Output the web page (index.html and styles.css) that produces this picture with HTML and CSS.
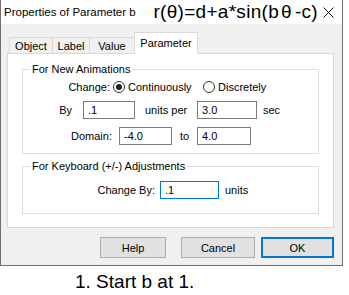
FILE: index.html
```html
<!DOCTYPE html>
<html>
<head>
<meta charset="utf-8">
<link rel="stylesheet" href="styles.css">
</head>
<body>
<div class="window">
  <div class="titlebar">
    <span class="title">Properties of Parameter b</span>
    <span class="formula">r(θ)=d+a*sin(b<span class="theta">θ</span>-c)</span>
    <span class="close"><svg width="11" height="11" viewBox="0 0 11 11"><path d="M0.5 0.5 L10.5 10.5 M10.5 0.5 L0.5 10.5" stroke="#111" stroke-width="1" fill="none"/></svg></span>
  </div>
  <div class="body">
    <div class="tabs">
      <div class="tab t-object">Object</div>
      <div class="tab t-label">Label</div>
      <div class="tab t-value">Value</div>
      <div class="tab t-param active">Parameter</div>
    </div>
    <div class="panel">
      <div class="group g1">
        <div class="legend">For New Animations</div>
        <div class="row r1">
          <span class="lbl w-change">Change:</span>
          <span class="opt opt1"><span class="radio checked"></span><span class="opt-text">Continuously</span></span>
          <span class="opt"><span class="radio"></span><span class="opt-text">Discretely</span></span>
        </div>
        <div class="row r2">
          <span class="lbl w-by">By</span>
          <span class="input in-by">.1</span>
          <span class="mid w-per">units per</span>
          <span class="input in-sec">3.0</span>
          <span class="after">sec</span>
        </div>
        <div class="row r3">
          <span class="lbl w-domain">Domain:</span>
          <span class="input in-min">-4.0</span>
          <span class="mid w-to">to</span>
          <span class="input in-max">4.0</span>
        </div>
      </div>
      <div class="group g2">
        <div class="legend">For Keyboard (+/-) Adjustments</div>
        <div class="row r4">
          <span class="lbl w-changeby">Change By:</span>
          <span class="input in-step focused">.1</span>
          <span class="after">units</span>
        </div>
      </div>
    </div>
    <div class="buttons">
      <div class="btn b-help">Help</div>
      <div class="btn b-cancel">Cancel</div>
      <div class="btn b-ok default">OK</div>
    </div>
  </div>
</div>
<p class="caption">1. Start b at 1.</p>
</body>
</html>
```

FILE: styles.css
```css
* { box-sizing: border-box; }
html, body { margin: 0; padding: 0; background: #fff; }
body {
  font-family: "Liberation Sans", Arial, sans-serif;
  color: #000;
  width: 349px;
  height: 295px;
  overflow: hidden;
}
.window {
  width: 343px;
  height: 266px;
  background: #f0f0f0;
  border: 1px solid #6f6f6f;
  border-top: none;
  display: flex;
  flex-direction: column;
}
.titlebar {
  height: 24px;
  background: #fff;
  display: flex;
  align-items: center;
  flex: none;
}
.title {
  font-size: 11.5px;
  padding-left: 3px;
  white-space: nowrap;
}
.formula {
  font-size: 19px;
  letter-spacing: 0.3px;
  margin-left: auto;
  white-space: nowrap;
  line-height: 22px;
}
.theta { margin: 0 3px 0 2px; }
.close {
  width: 11px;
  height: 11px;
  margin: 0 8px 0 5px;
  display: flex;
}
.body {
  flex: 1;
  padding: 0 8px 0 6px;
  display: flex;
  flex-direction: column;
  font-size: 11px;
}
.tabs {
  height: 30px;
  margin-bottom: -1px;
  display: flex;
  align-items: flex-end;
  padding-left: 2px;
  position: relative;
  z-index: 1;
}
.tab {
  height: 16px;
  margin-bottom: 1px;
  border: 1px solid #d9d9d9;
  border-bottom: none;
  background: #f0f0f0;
  display: flex;
  align-items: center;
  justify-content: center;
  margin-left: -1px;
  line-height: 14px;
}
.t-object { width: 44px; margin-left: 0; }
.t-label { width: 38px; }
.t-value { width: 46px; }
.t-param { width: 64px; }
.tab.active {
  height: 22px;
  margin-bottom: 0;
  background: #fff;
  align-items: flex-start;
  padding-top: 3px;
}
.panel {
  background: #fff;
  border: 1px solid #d9d9d9;
  padding-bottom: 13px;
}
.group {
  border: 1px solid #dcdcdc;
  margin: 0 14px;
}
.g1 { margin-top: 15px; padding-bottom: 8px; }
.g2 { margin-top: 12px; padding-bottom: 14px; }
.legend {
  width: max-content;
  margin: -8px 0 0 7px;
  padding: 0 2px;
  background: #fff;
  line-height: 14px;
}
.row {
  height: 18px;
  display: flex;
  align-items: center;
  white-space: nowrap;
}
.r1 { margin-top: 2px; }
.r2 { margin-top: 5px; }
.r3 { margin-top: 8px; }
.r4 { margin-top: 8px; }
.lbl { text-align: right; flex: none; }
.w-change { width: 87px; }
.w-by { width: 49px; }
.w-domain { width: 89px; }
.w-changeby { width: 132px; }
.opt { display: flex; align-items: center; flex: none; }
.opt1 { width: 90px; margin-left: 3px; }
.radio {
  width: 12px;
  height: 12px;
  border: 1px solid #333;
  border-radius: 50%;
  background: #fff;
  display: flex;
  align-items: center;
  justify-content: center;
  flex: none;
}
.radio.checked::after {
  content: "";
  width: 6px;
  height: 6px;
  border-radius: 50%;
  background: #222;
}
.opt-text { margin-left: 3px; }
.input {
  height: 18px;
  border: 1px solid #7a7a7a;
  background: #fff;
  padding: 0 4px;
  line-height: 16px;
  flex: none;
}
.input.focused { border-color: #0078d7; }
.in-by { width: 52px; margin-left: 11px; }
.w-per { width: 52px; margin-left: 10px; }
.in-sec { width: 60px; }
.in-min { width: 53px; margin-left: 7px; }
.w-to { width: 25px; padding-left: 8px; }
.in-max { width: 54px; }
.in-step { width: 59px; margin-left: 5px; }
.after { margin-left: 6px; }
.buttons {
  margin-top: 9px;
  display: flex;
  justify-content: flex-end;
}
.btn {
  height: 21px;
  border: 1px solid #adadad;
  background: #e1e1e1;
  display: flex;
  align-items: center;
  justify-content: center;
}
.b-help { width: 66px; margin-right: 15px; }
.b-cancel { width: 74px; margin-right: 6px; }
.b-ok { width: 73px; }
.btn.default { border: 2px solid #0078d7; }
.caption {
  margin: 5px 0 0 75px;
  font-size: 19px;
  line-height: 22px;
}
```
